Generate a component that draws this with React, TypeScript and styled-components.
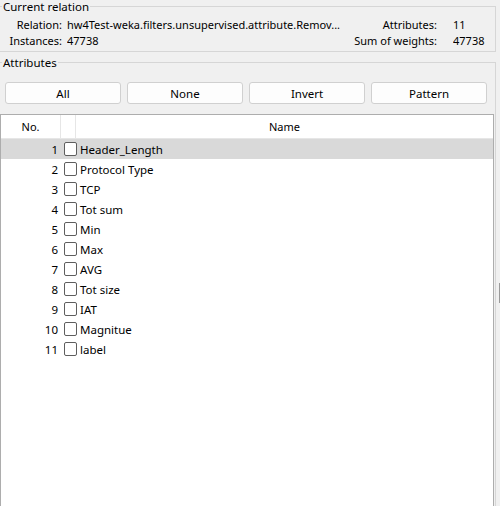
import React from "react";
import styled, { createGlobalStyle } from "styled-components";

const Global = createGlobalStyle`
  html, body { margin: 0; padding: 0; background: #f0f0f0; }
  body { font-family: "Noto Sans", "Open Sans", sans-serif; font-size: 11px; color: #000; }
  * { box-sizing: border-box; }
`;

const Page = styled.div`
  width: 500px;
  height: 506px;
  overflow: hidden;
  display: flex;
  flex-direction: column;
  background: #f0f0f0;
  position: relative;
`;

const Group = styled.fieldset<{ $grow?: boolean }>`
  margin: 0;
  padding: 0;
  width: 496px;
  border: 1px solid #d6d6d6;
  border-left: none;
  min-width: 0;
  ${(p) => (p.$grow ? "flex: 1; border-bottom: none; margin-top: 4px;" : "")}
`;

const Legend = styled.legend`
  padding: 0 1px;
  margin-left: 2px;
  line-height: 13px;
  font-size: 11.5px;
`;

const InfoGrid = styled.div`
  display: grid;
  grid-template-columns: 62px 1fr auto 42px;
  column-gap: 5px;
  padding: 4px 0 2px 0;
  line-height: 16px;
`;

const Label = styled.span`
  text-align: right;
  white-space: nowrap;
`;

const RightLabel = styled(Label)`
  padding-right: 11px;
`;

const Value = styled.span`
  white-space: nowrap;
  overflow: hidden;
`;

const ButtonRow = styled.div`
  display: grid;
  grid-template-columns: repeat(4, 116px);
  column-gap: 6px;
  padding: 13px 0 0 5px;
`;

const Button = styled.button`
  height: 22px;
  font: inherit;
  font-size: 11.5px;
  color: #000;
  background: #fdfdfd;
  border: 1px solid #d0d0d0;
  border-radius: 3px;
  padding: 0;
`;

const Table = styled.div`
  margin-top: 10px;
  width: 494px;
  height: 400px;
  background: #fff;
  border: 1px solid #adadad;
  border-bottom: none;
`;

const HeaderRow = styled.div`
  display: grid;
  grid-template-columns: 60px 15px 1fr;
  height: 24px;
  border-bottom: 1px solid #e6e6e6;
`;

const HeaderCell = styled.div<{ $sep?: boolean }>`
  display: flex;
  align-items: center;
  justify-content: center;
  border-right: ${(p) => (p.$sep ? "1px solid #e6e6e6" : "none")};
`;

const Row = styled.div<{ $selected?: boolean }>`
  display: grid;
  grid-template-columns: 57px 19px 1fr;
  align-items: center;
  height: 20px;
  font-size: 11.5px;
  background: ${(p) => (p.$selected ? "#d9d9d9" : "transparent")};
`;

const Num = styled.span`
  text-align: right;
`;

const Check = styled.span`
  justify-self: end;
  width: 13px;
  height: 14px;
  border: 1px solid #5e5e5e;
  border-radius: 2px;
  background: #fff;
`;

const Name = styled.span`
  padding-left: 3px;
`;

const Splitter = styled.div`
  position: absolute;
  right: 0;
  top: 283px;
  width: 1px;
  height: 20px;
  background: #9a9a9a;
`;

const names = [
  "Header_Length",
  "Protocol Type",
  "TCP",
  "Tot sum",
  "Min",
  "Max",
  "AVG",
  "Tot size",
  "IAT",
  "Magnitue",
  "label",
];

export default function App() {
  return (
    <Page>
      <Global />
      <Group>
        <Legend>Current relation</Legend>
        <InfoGrid>
          <Label>Relation:</Label>
          <Value>hw4Test-weka.filters.unsupervised.attribute.Remov...</Value>
          <RightLabel>Attributes:</RightLabel>
          <Value>11</Value>
          <Label>Instances:</Label>
          <Value>47738</Value>
          <RightLabel>Sum of weights:</RightLabel>
          <Value>47738</Value>
        </InfoGrid>
      </Group>
      <Group $grow>
        <Legend>Attributes</Legend>
        <ButtonRow>
          <Button>All</Button>
          <Button>None</Button>
          <Button>Invert</Button>
          <Button>Pattern</Button>
        </ButtonRow>
        <Table>
          <HeaderRow>
            <HeaderCell $sep>No.</HeaderCell>
            <HeaderCell $sep />
            <HeaderCell>Name</HeaderCell>
          </HeaderRow>
          {names.map((n, i) => (
            <Row key={n} $selected={i === 0}>
              <Num>{i + 1}</Num>
              <Check />
              <Name>{n}</Name>
            </Row>
          ))}
        </Table>
      </Group>
      <Splitter />
    </Page>
  );
}
